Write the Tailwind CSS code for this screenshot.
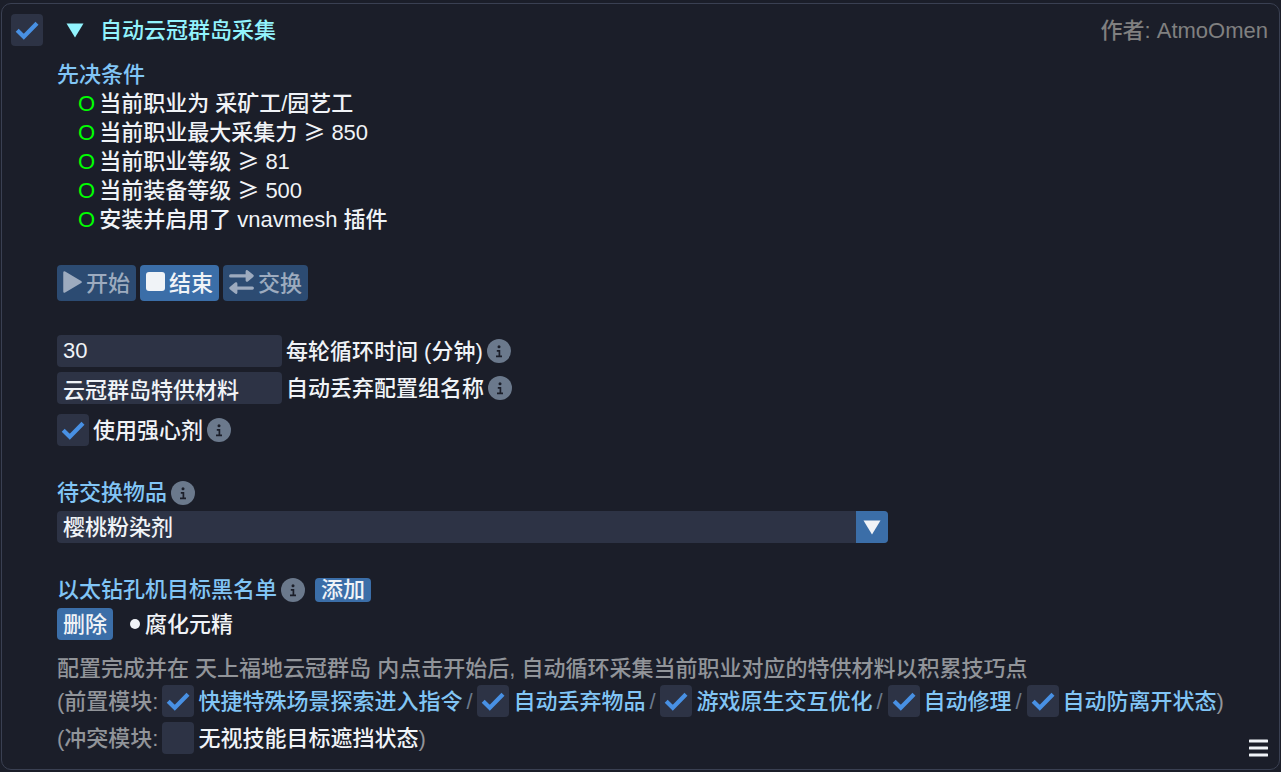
<!DOCTYPE html>
<html lang="zh-CN">
<head>
    <meta charset="UTF-8">
    <meta name="viewport" content="width=device-width, initial-scale=1.0">
    <title>自动云冠群岛采集</title>
    <script src="https://cdn.jsdelivr.net/npm/@tailwindcss/browser@4"></script>
</head>
<body class="min-h-screen bg-[#1b1e29] px-px pt-[3px] pb-[2px] font-['Liberation_Sans','Noto_Sans_CJK_SC',sans-serif] text-[22px] leading-[29px] font-medium text-[#f0f3f7]">
    <!-- Shared icons -->
    <svg class="hidden">
        <symbol id="check" viewBox="0 0 32 32">
            <path d="M6.2 16.2 L12.8 22.8 L26 9.3" fill="none" stroke="#4890e3" stroke-width="4.2" />
        </symbol>
        <symbol id="info" viewBox="0 0 24 24">
            <circle cx="12" cy="12" r="12" fill="#6b798c" />
            <circle cx="12" cy="7.8" r="1.5" fill="#1b1e29" />
            <path d="M9.8 11.9 H12.4 V17 M9 17.4 H15" fill="none" stroke="#1b1e29" stroke-width="1.7" />
        </symbol>
    </svg>

    <main class="rounded-[10px] border border-[#3a4052] pt-[10px] pr-[11px] pb-[15px] pl-[9px]">
        <!-- Module header -->
        <header class="flex items-center">
            <label class="grid size-8 shrink-0 rounded bg-[#2d3345]">
                <input type="checkbox" checked aria-label="启用模块" class="peer col-start-1 row-start-1 size-8 appearance-none">
                <svg class="pointer-events-none invisible col-start-1 row-start-1 size-8 peer-checked:visible"><use href="#check" /></svg>
            </label>
            <button class="ml-[23px] flex items-center gap-4 text-[#92f3fd]">
                <svg class="h-[15px] w-[18px]" viewBox="0 0 18 15"><path d="M0.5 0.5 H17.5 L9 14.5 Z" fill="currentColor" /></svg>
                <h1>自动云冠群岛采集</h1>
            </button>
            <p class="ml-auto text-[#808080]">作者: AtmoOmen</p>
        </header>

        <div class="mt-[14px] pl-[46px]">
            <!-- Prerequisites -->
            <h2 class="text-[#81c5f5]">先决条件</h2>
            <ul class="pl-[21px]">
                <li class="flex gap-1"><span class="text-[#00ff00]">O</span><p>当前职业为 采矿工/园艺工</p></li>
                <li class="flex gap-1"><span class="text-[#00ff00]">O</span><p>当前职业最大采集力 <span class="font-['Noto_Sans_CJK_SC',sans-serif] leading-none">≥</span> 850</p></li>
                <li class="flex gap-1"><span class="text-[#00ff00]">O</span><p>当前职业等级 <span class="font-['Noto_Sans_CJK_SC',sans-serif] leading-none">≥</span> 81</p></li>
                <li class="flex gap-1"><span class="text-[#00ff00]">O</span><p>当前装备等级 <span class="font-['Noto_Sans_CJK_SC',sans-serif] leading-none">≥</span> 500</p></li>
                <li class="flex gap-1"><span class="text-[#00ff00]">O</span><p>安装并启用了 vnavmesh 插件</p></li>
            </ul>

            <!-- Actions -->
            <div class="mt-[31px] flex gap-1">
                <button disabled class="flex h-9 items-center gap-1 rounded bg-[#2c4b72] px-[6px] text-[#9dabbf]">
                    <svg class="mb-[3px] h-[22px] w-[19px]" viewBox="0 0 19 22"><path d="M1.5 1.5 L17.5 11 L1.5 20.5 Z" fill="currentColor" stroke="currentColor" stroke-width="2.5" stroke-linejoin="round" /></svg>
                    开始
                </button>
                <button class="flex h-9 items-center gap-1 rounded bg-[#3b6ea8] px-[6px]">
                    <svg class="mb-[3px] size-[19px]" viewBox="0 0 19 19"><rect width="19" height="19" rx="3" fill="currentColor" /></svg>
                    结束
                </button>
                <button disabled class="flex h-9 items-center gap-1 rounded bg-[#2c4b72] px-[6px] text-[#9dabbf]">
                    <svg class="mb-[3px] h-6 w-[25px]" viewBox="0 0 25 24" fill="none" stroke="currentColor" stroke-linecap="round" stroke-linejoin="round">
                        <path d="M1.6 5.9 H17 M23.4 18.1 H8" stroke-width="3.1" />
                        <path d="M18 1.5 L23.3 5.9 L18 10.3 Z M7 13.7 L1.7 18.1 L7 22.5 Z" fill="currentColor" stroke-width="2.8" />
                    </svg>
                    交换
                </button>
            </div>

            <!-- Settings -->
            <div class="mt-[34px] flex items-center gap-1">
                <input type="text" id="cycle" value="30" class="h-8 w-[225px] rounded bg-[#2d3345] px-[6px]">
                <label for="cycle">每轮循环时间 (分钟)</label>
                <svg class="size-6"><use href="#info" /></svg>
            </div>
            <div class="mt-[5px] flex items-center gap-1">
                <input type="text" id="group" value="云冠群岛特供材料" class="h-8 w-[225px] rounded bg-[#2d3345] px-[6px]">
                <label for="group">自动丢弃配置组名称</label>
                <svg class="size-6"><use href="#info" /></svg>
            </div>
            <div class="mt-[10px] flex items-center gap-1">
                <label class="flex items-center gap-1">
                    <span class="grid size-8 rounded bg-[#2d3345]">
                        <input type="checkbox" checked class="peer col-start-1 row-start-1 size-8 appearance-none">
                        <svg class="pointer-events-none invisible col-start-1 row-start-1 size-8 peer-checked:visible"><use href="#check" /></svg>
                    </span>
                    使用强心剂
                </label>
                <svg class="size-6"><use href="#info" /></svg>
            </div>

            <!-- Exchange item -->
            <div class="mt-8 flex items-center gap-1">
                <label for="item" class="text-[#81c5f5]">待交换物品</label>
                <svg class="size-6"><use href="#info" /></svg>
            </div>
            <div class="mt-1 grid max-w-[831px] grid-cols-[1fr_32px] overflow-hidden rounded bg-[#2d3345]">
                <select id="item" class="col-span-2 col-start-1 row-start-1 h-8 w-full appearance-none px-[6px]">
                    <option>樱桃粉染剂</option>
                </select>
                <span class="pointer-events-none col-start-2 row-start-1 flex items-center justify-center bg-[#3b6ea8]">
                    <svg class="h-[15px] w-[18px]" viewBox="0 0 18 15"><path d="M0.5 0.5 H17.5 L9 14.5 Z" fill="currentColor" /></svg>
                </span>
            </div>

            <!-- Blacklist -->
            <div class="mt-8 flex items-center gap-1">
                <h2 class="text-[#81c5f5]">以太钻孔机目标黑名单</h2>
                <svg class="size-6"><use href="#info" /></svg>
                <button class="ml-[6px] h-6 rounded bg-[#3b6ea8] px-[6px] leading-6">添加</button>
            </div>
            <div class="mt-1 flex items-center">
                <button class="h-8 rounded bg-[#3b6ea8] px-[6px]">删除</button>
                <span class="mr-[5px] ml-[17px] size-[10px] rounded-full bg-[#f0f3f7]"></span>
                腐化元精
            </div>

            <!-- Description and related modules -->
            <div class="mt-[14px] text-[#919499]">
                <p>配置完成并在 天上福地云冠群岛 内点击开始后, 自动循环采集当前职业对应的特供材料以积累技巧点</p>
                <div class="mt-[2px] flex flex-wrap items-center gap-1">
                    (前置模块:
                    <label class="flex items-center gap-1 text-[#81c5f5]">
                        <span class="grid size-8 rounded bg-[#2d3345]">
                            <input type="checkbox" checked class="peer col-start-1 row-start-1 size-8 appearance-none">
                            <svg class="pointer-events-none invisible col-start-1 row-start-1 size-8 peer-checked:visible"><use href="#check" /></svg>
                        </span>
                        快捷特殊场景探索进入指令
                    </label>
                    <span class="w-[7px] text-[#6b798c]">/</span>
                    <label class="flex items-center gap-1 text-[#81c5f5]">
                        <span class="grid size-8 rounded bg-[#2d3345]">
                            <input type="checkbox" checked class="peer col-start-1 row-start-1 size-8 appearance-none">
                            <svg class="pointer-events-none invisible col-start-1 row-start-1 size-8 peer-checked:visible"><use href="#check" /></svg>
                        </span>
                        自动丢弃物品
                    </label>
                    <span class="w-[7px] text-[#6b798c]">/</span>
                    <label class="flex items-center gap-1 text-[#81c5f5]">
                        <span class="grid size-8 rounded bg-[#2d3345]">
                            <input type="checkbox" checked class="peer col-start-1 row-start-1 size-8 appearance-none">
                            <svg class="pointer-events-none invisible col-start-1 row-start-1 size-8 peer-checked:visible"><use href="#check" /></svg>
                        </span>
                        游戏原生交互优化
                    </label>
                    <span class="w-[7px] text-[#6b798c]">/</span>
                    <label class="flex items-center gap-1 text-[#81c5f5]">
                        <span class="grid size-8 rounded bg-[#2d3345]">
                            <input type="checkbox" checked class="peer col-start-1 row-start-1 size-8 appearance-none">
                            <svg class="pointer-events-none invisible col-start-1 row-start-1 size-8 peer-checked:visible"><use href="#check" /></svg>
                        </span>
                        自动修理
                    </label>
                    <span class="w-[7px] text-[#6b798c]">/</span>
                    <div class="flex items-center">
                        <label class="flex items-center gap-1 text-[#81c5f5]">
                            <span class="grid size-8 rounded bg-[#2d3345]">
                                <input type="checkbox" checked class="peer col-start-1 row-start-1 size-8 appearance-none">
                                <svg class="pointer-events-none invisible col-start-1 row-start-1 size-8 peer-checked:visible"><use href="#check" /></svg>
                            </span>
                            自动防离开状态
                        </label>
                        )
                    </div>
                </div>
                <div class="mt-[5px] flex items-center">
                    (冲突模块:
                    <label class="ml-1 flex items-center gap-1 text-[#f0f3f7]">
                        <span class="grid size-8 rounded bg-[#2d3345]">
                            <input type="checkbox" class="peer col-start-1 row-start-1 size-8 appearance-none">
                            <svg class="pointer-events-none invisible col-start-1 row-start-1 size-8 peer-checked:visible"><use href="#check" /></svg>
                        </span>
                        无视技能目标遮挡状态
                    </label>
                    )
                    <button aria-label="菜单" class="mt-4 -mb-1 ml-auto text-[#f0f3f7]">
                        <svg class="h-[18px] w-[19px]" viewBox="0 0 19 18"><path d="M1 2 H18 M1 9 H18 M1 16 H18" stroke="currentColor" stroke-width="3" stroke-linecap="round" /></svg>
                    </button>
                </div>
            </div>
        </div>
    </main>
</body>
</html>
